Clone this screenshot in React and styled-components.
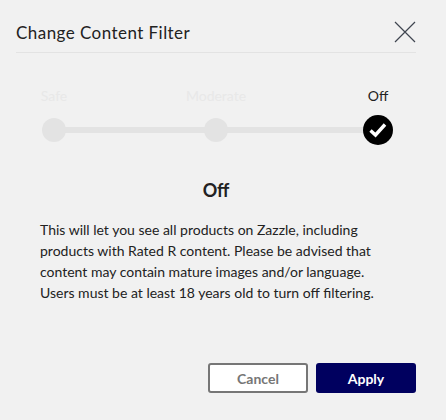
import React from 'react';
import styled, { createGlobalStyle } from 'styled-components';

const steps = [
    { label: 'Safe' },
    { label: 'Moderate' },
    { label: 'Off', active: true },
];

const App = () => (
    <>
        <GlobalStyle />
        <Modal>
            <Header>
                <Title>Change Content Filter</Title>
                <CloseButton aria-label="Close">
                    <svg width="22" height="22" viewBox="0 0 22 22" fill="none" stroke="#3f4650" strokeWidth="1.2">
                        <path d="M1 1L21 21M21 1L1 21" />
                    </svg>
                </CloseButton>
            </Header>
            <Stepper>
                <Track />
                {steps.map((step) => (
                    <Step key={step.label}>
                        <StepLabel $active={step.active}>{step.label}</StepLabel>
                        <NodeSlot>
                            <Node $active={step.active}>
                                {step.active && (
                                    <svg width="20" height="20" viewBox="0 0 20 20" fill="none" stroke="#fff" strokeWidth="3.4">
                                        <path d="M2.5 10.5L7.5 15L17 4.5" />
                                    </svg>
                                )}
                            </Node>
                        </NodeSlot>
                    </Step>
                ))}
            </Stepper>
            <Heading>Off</Heading>
            <Body>
                This will let you see all products on Zazzle, including products with Rated R content.
                Please be advised that content may contain mature images and/or language. Users must
                be at least 18 years old to turn off filtering.
            </Body>
            <Actions>
                <Button>Cancel</Button>
                <Button $primary>Apply</Button>
            </Actions>
        </Modal>
    </>
);

const GlobalStyle = createGlobalStyle`
    html, body {
        margin: 0;
        background: #f1f1f1;
    }
`;

const Modal = styled.div`
    width: 446px;
    height: 420px;
    box-sizing: border-box;
    padding: 12px 30px 0 16px;
    background: #f1f1f1;
    color: #222;
    font-family: Lato, "Liberation Sans", sans-serif;
    overflow: hidden;
`;

const Header = styled.div`
    display: flex;
    align-items: center;
    justify-content: space-between;
    height: 40px;
    border-bottom: 1px solid #e3e3e3;
`;

const Title = styled.h1`
    margin: 0;
    font-size: 17px;
    font-weight: 400;
    letter-spacing: 0.45px;
`;

const CloseButton = styled.button`
    display: flex;
    padding: 0;
    border: 0;
    background: none;
`;

const Stepper = styled.div`
    position: relative;
    display: flex;
    justify-content: space-between;
    margin: 34px 8px 0;
`;

const Track = styled.div`
    position: absolute;
    left: 30px;
    right: 30px;
    bottom: 12px;
    height: 6px;
    background: #e3e3e3;
`;

const Step = styled.div`
    position: relative;
    display: flex;
    flex-direction: column;
    align-items: center;
    width: 60px;
`;

const StepLabel = styled.div`
    height: 18px;
    font-size: 14px;
    line-height: 18px;
    white-space: nowrap;
    color: ${(p) => (p.$active ? '#222' : '#e8e8e8')};
`;

const NodeSlot = styled.div`
    display: flex;
    align-items: center;
    justify-content: center;
    height: 30px;
    margin-top: 10px;
`;

const Node = styled.div`
    display: flex;
    align-items: center;
    justify-content: center;
    width: ${(p) => (p.$active ? '30px' : '24px')};
    height: ${(p) => (p.$active ? '30px' : '24px')};
    border-radius: 50%;
    background: ${(p) => (p.$active ? '#000' : '#e3e3e3')};
`;

const Heading = styled.h2`
    margin: 34px 0 0;
    font-size: 18px;
    line-height: 22px;
    font-weight: 700;
    text-align: center;
`;

const Body = styled.p`
    margin: 18px 0 0 24px;
    width: 345px;
    font-size: 14px;
    line-height: 21px;
`;

const Actions = styled.div`
    display: flex;
    justify-content: flex-end;
    gap: 8px;
    margin-top: 60px;
`;

const Button = styled.button`
    width: 100px;
    height: 30px;
    box-sizing: border-box;
    border: ${(p) => (p.$primary ? '0' : '2px solid #767676')};
    border-radius: 3px;
    background: ${(p) => (p.$primary ? '#00005f' : '#fff')};
    color: ${(p) => (p.$primary ? '#fff' : '#767676')};
    font-family: inherit;
    font-size: 14px;
    font-weight: 700;
`;

export default App;
